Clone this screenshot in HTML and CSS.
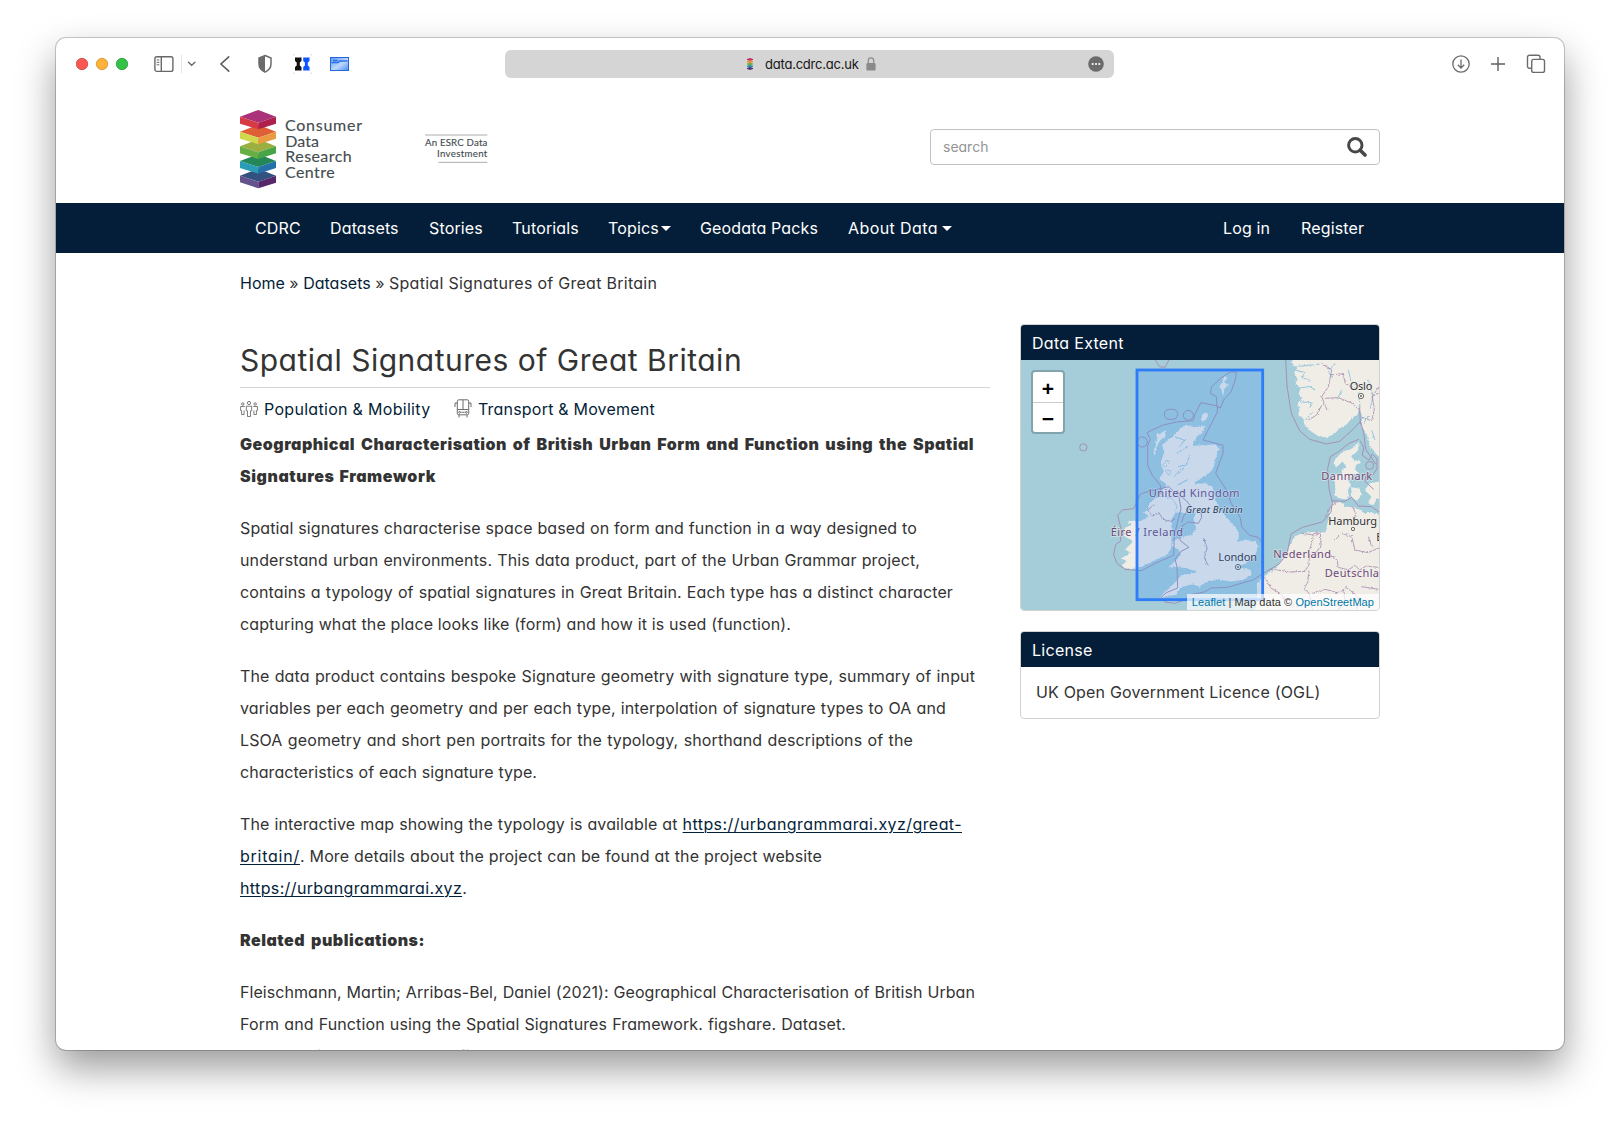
FILE: index.html
```html
<!DOCTYPE html>
<html lang="en">
<head>
<meta charset="utf-8">
<title>Spatial Signatures of Great Britain</title>
<link rel="stylesheet" href="styles.css">
</head>
<body>
<div class="window">
  <div class="toolbar">
    <svg class="lights" width="52" height="14" viewBox="0 0 52 14"><circle cx="6" cy="7" r="5.7" fill="#fc5753" stroke="#cf3f3c" stroke-width=".8"/><circle cx="26" cy="7" r="5.7" fill="#fdb23c" stroke="#d1912f" stroke-width=".8"/><circle cx="46" cy="7" r="5.7" fill="#34c147" stroke="#279a35" stroke-width=".8"/></svg>
    <svg class="side" width="42" height="20" viewBox="0 0 42 20" fill="none" stroke="#686868" stroke-width="1.4"><rect x=".9" y="2.8" width="18" height="14.6" rx="2"/><path d="M7.300 3v14.300"/><path d="M2.700 6h2.600M2.700 8.400h2.600M2.700 10.800h2.600" stroke-width="1"/><path d="M27.500 1v18" stroke="#e4e4e4" stroke-width="1"/><path d="M34.500 8.200l3.200 3 3.200-3" stroke-linecap="round"/></svg>
    <svg class="back" width="10" height="18" viewBox="0 0 10 18"><path d="M8.700 1.800 1 9l7.700 7.200" fill="none" stroke="#5f5f5f" stroke-width="1.600" stroke-linecap="round"/></svg>
    <svg class="shield" width="14" height="20" viewBox="0 0 14 20"><path d="M7 1.500 13 4v6c0 4.200-2.600 6.500-6 8.200C3.600 16.500 1 14.200 1 10V4z" fill="none" stroke="#6b6b6b" stroke-width="1.500"/><path d="M7 1.500V18.200C3.600 16.500 1 14.200 1 10V4z" fill="#6b6b6b"/></svg>
    <svg class="ext" width="19" height="20" viewBox="0 0 19 20"><path d="M2 3.500h6.500v3.500L6.800 8.500v3l1.700 1.600V16.500H2v-3.400l1.700-1.600v-3L2 7z" fill="#111"/><path d="M10.200 3.500h6.300v3.500l-1.700 1.500v3l1.700 1.600v3.400h-6.300v-3.400l1.700-1.600v-3L10.200 7z" fill="#0a55ff"/><path d="M.5 1.500v-1h1M17.500.5h1v1M.5 18.500v1h1M17.500 19.500h1v-1" fill="none" stroke="#ccc" stroke-width=".7"/></svg>
    <svg class="folder" width="19" height="14" viewBox="0 0 19 14"><defs><linearGradient id="fg" x1="0" y1="0" x2="1" y2="1"><stop offset="0" stop-color="#5b97f5"/><stop offset=".55" stop-color="#bcd9fb"/><stop offset="1" stop-color="#4a8bf3"/></linearGradient></defs><rect x=".5" y=".5" width="18" height="13" fill="url(#fg)" stroke="#2467dc"/><path d="M3 3.500h4.500M1.500 5.500h6.500l1.500-1.500H17.500" fill="none" stroke="#2e70e8" stroke-width="1.400"/></svg>
    <div class="address">
      <svg width="6" height="12" viewBox="0 0 6 12"><path d="M0 1l3-1 3 1v1L3 3 0 2z" fill="#c52f5c"/><path d="M0 3.300l3-.8 3 .8v1l-3 1-3-1z" fill="#ef9138"/><path d="M0 5.500l3-.8 3 .8v1l-3 1-3-1z" fill="#6bb044"/><path d="M0 7.700l3-.8 3 .8v1l-3 1-3-1z" fill="#238caa"/><path d="M0 10l3-1 3 1v1l-3 1-3-1z" fill="#52347c"/></svg>
      <span class="host">data.cdrc.ac.uk</span>
      <svg class="lock" width="10" height="14" viewBox="0 0 10 14"><rect x=".4" y="6" width="9.200" height="7.500" rx="1.200" fill="#8a8a8a"/><path d="M2.300 6.500V3.800a2.700 2.900 0 0 1 5.400 0v2.700" fill="none" stroke="#8a8a8a" stroke-width="1.200"/></svg>
      <svg class="dots" width="16" height="16" viewBox="0 0 16 16"><circle cx="8" cy="8" r="7.800" fill="#6b6b6b"/><g fill="#fff"><circle cx="4.700" cy="8" r="1.100"/><circle cx="8" cy="8" r="1.100"/><circle cx="11.300" cy="8" r="1.100"/></g></svg>
    </div>
    <svg class="down" width="18" height="18" viewBox="0 0 18 18" fill="none" stroke="#6b6b6b" stroke-width="1.300"><circle cx="9" cy="9" r="8.200"/><path d="M9 4.500v8.300M5.800 9.800 9 13l3.200-3.200"/></svg>
    <svg class="plus" width="16" height="16" viewBox="0 0 16 16"><path d="M8 1v14M1 8h14" stroke="#5f5f5f" stroke-width="1.400"/></svg>
    <svg class="tabs" width="20" height="20" viewBox="0 0 20 20" fill="none" stroke="#6b6b6b" stroke-width="1.400"><path d="M5.500 14.300H3.500a2 2 0 0 1-2-2V3.200a2 2 0 0 1 2-2h8.500a2 2 0 0 1 2 2v2"/><rect x="5.700" y="5.400" width="12.800" height="13" rx="2"/></svg>
  </div>

  <header class="masthead">
    <svg width="260" height="100" viewBox="30 0 780 300">
      <g><path d="M85 206l53 21-53 18-55-18z" fill="#33517f"/><path d="M30 227l55 18v20l-55-18z" fill="#62538c"/><path d="M138 227l-53 18v20l53-17z" fill="#562769"/></g>
      <g><path d="M85 162l53 21-53 18-55-18z" fill="#238757"/><path d="M30 183l55 18v20l-55-17z" fill="#2a9cb5"/><path d="M138 183l-53 18v20l53-17z" fill="#2470a9"/></g>
      <g><path d="M85 118l53 21-53 18-55-18z" fill="#9baf41"/><path d="M30 139l55 18v20l-55-17z" fill="#67af45"/><path d="M138 139l-53 18v20l53-17z" fill="#47a447"/></g>
      <g><path d="M85 74l53 21-53 18-55-18z" fill="#df6037"/><path d="M30 95l55 18v20l-55-17z" fill="#d0d94e"/><path d="M138 95l-53 18v20l53-17z" fill="#e99b42"/></g>
      <g><path d="M85 30l53 20-53 18-55-18z" fill="#ab3278"/><path d="M30 50l55 18v20l-55-17z" fill="#d63a45"/><path d="M138 50l-53 18v20l53-17z" fill="#ae204b"/></g>
      <g class="logo-text"><text x="165" y="93" textLength="231">Consumer</text><text x="166" y="140" textLength="101">Data</text><text x="166" y="187" textLength="199">Research</text><text x="165" y="234" textLength="149">Centre</text></g>
      <path d="M585 105h187M625 187h147" stroke="#a9adb2" stroke-width="3"/>
      <g class="esrc-text"><text x="585" y="139" textLength="187">An ESRC Data</text><text x="621" y="171" textLength="151">Investment</text></g>
    </svg>
    <div class="search"><span>search</span><svg width="20" height="20" viewBox="0 0 20 20" fill="none" stroke="#484848"><circle cx="8.300" cy="8.300" r="6.700" stroke-width="3"/><path d="M13.200 13.200 18 18" stroke-width="3.600" stroke-linecap="round"/></svg></div>
  </header>

  <nav class="nav">
    <a>CDRC</a><a>Datasets</a><a>Stories</a><a>Tutorials</a><a class="topic-menu">Topics<i class="caret"></i></a><a>Geodata Packs</a><a class="about">About Data<i class="caret"></i></a>
    <a class="login">Log in</a><a>Register</a>
  </nav>

  <div class="crumbs"><a>Home</a> » <a>Datasets</a> » <span>Spatial Signatures of Great Britain</span></div>

  <div class="columns">
    <main class="main">
      <h1><span>Spatial Signatures of Great Britain</span></h1>
      <div class="topics">
        <svg width="18" height="16" viewBox="0 0 18 16" fill="none" stroke="#5c5c5c" stroke-width=".8"><circle cx="9" cy="2" r="1.600"/><circle cx="2.800" cy="3" r="1.200"/><circle cx="15.200" cy="3" r="1.200"/><path d="M6.300 5.200h5.400v4.600h-1.200v5.700h-3V9.800H6.300zM4.800 5.500H.6v4h1v4h2.500v-4M13.200 5.500h4.200v4h-1v4h-2.500v-4"/></svg>
        <a class="pop">Population &amp; Mobility</a>
        <svg class="bus" width="18" height="19" viewBox="0 0 18 19" fill="none" stroke="#5c5c5c" stroke-width=".9"><rect x="3.300" y=".8" width="11.400" height="15" rx="1.500"/><path d="M9 1v9.500M3.500 10.500h11M3.300 4H1v4M14.700 4H17v4M5 16v2.500M13 16v2.500M7.300 13.300h3.400"/><circle cx="5.600" cy="13.300" r=".9"/><circle cx="12.400" cy="13.300" r=".9"/></svg>
        <a class="trans">Transport &amp; Movement</a>
      </div>
      <p class="strong intro"><span>Geographical Characterisation of British Urban Form and Function using the Spatial</span><span>Signatures Framework</span></p>
      <p class="form"><span>Spatial signatures characterise space based on form and function in a way designed to</span><span>understand urban environments. This data product, part of the Urban Grammar project,</span><span>contains a typology of spatial signatures in Great Britain. Each type has a distinct character</span><span>capturing what the place looks like (form) and how it is used (function).</span></p>
      <p class="product"><span>The data product contains bespoke Signature geometry with signature type, summary of input</span><span>variables per each geometry and per each type, interpolation of signature types to OA and</span><span>LSOA geometry and short pen portraits for the typology, shorthand descriptions of the</span><span>characteristics of each signature type.</span></p>
      <p class="links"><span>The interactive map showing the typology is available at <a>https://urbangrammarai.xyz/great-</a></span><span><a class="wide">britain/</a>. More details about the project can be found at the project website</span><span><a class="snug">https://urbangrammarai.xyz</a>.</span></p>
      <p class="strong related"><span>Related publications:</span></p>
      <p class="cite"><span>Fleischmann, Martin; Arribas-Bel, Daniel (2021): Geographical Characterisation of British Urban</span><span>Form and Function using the Spatial Signatures Framework. figshare. Dataset.</span><span><a>https://doi.org/10.6084/m9.figshare</a></span></p>
    </main>

    <aside class="aside">
      <section class="panel">
        <h2>Data Extent</h2>
        <div class="map">
          <svg width="358" height="250" viewBox="18 120 1074 750">
            <defs><filter id="coast" x="-5%" y="-5%" width="110%" height="110%"><feTurbulence type="fractalNoise" baseFrequency=".16" numOctaves="2" seed="4"/><feDisplacementMap in="SourceGraphic" scale="9" xChannelSelector="R" yChannelSelector="G"/></filter></defs>
            <rect x="18" y="120" width="1074" height="750" fill="#a4cdd9"/>
            <g filter="url(#coast)">
            <g fill="#f0ede7" stroke="#8ec6dc" stroke-width="2" stroke-linejoin="round">
              <path d="M832 116l-2 20 16 8-10 12 10 22-6 12 14 14-4 20 10 14-14 10 6 22-4 14 16 12 2 16 20 22 24 16 26 4 24-12 12-14 24-14 12-16 20-12 4-16 8 18-2 30 16 26 8 30 18 26 20 20V116z"/>
              <path d="M1034 362l-22 22-30 10-22 22-8 20 16 4 14-14 10 14-14 12 4 14-22-4-6 10 6 30-2 26 14 8 22 4 10-10-4-20 10-14-8-14 14-16 22-8-16-8 2-14 14-8-6-10-14 4-8-14 18-12zM1008 500l26 4 8 20-16 20-20-12zM1048 510l16-22 36-6v50l-14 6-10 20-18-8 10-20z"/>
              <path d="M948 548l30-4 12 14 36 4 22 16 20-2 34 8V880H718l8-40-2-50 22-22 34-22 18-26 16-20 12-32 14-22 34-10 30-2 26 2 6-26z"/>
              <path d="M500 320l14-6 24 6 34-4-8 22-18 12-8 14-4 12 68-4 12 14-12 32-4 24-14 18-28 18-16 12 30-2 24 12 10 42 12 26 22 26 28 30 8 22-6 18 24-6 30 6 10 16-14 34-24 16-20 12 34 6 4 14-22 18-40 6-46-6-34 10-16 12-20-8-34 8-18 24-24 4-28 6 16-18 36-34 18-20 44-8-28-10-36-4-24 2 22-20 18-18-6-16-22-12 8-18 30-12 26-4 10-22-8-26 8-18-24 4-26-4-22 8 10-20-10-20-22 12-4-22-14-12 24-30-24-18 14-20-8-30 10-30-6-22 16-12z"/>
              <path d="M402 548l20-16 24-4 26 8 14 22-4 22-12 20 2 44-2 38-14 24-34 14-42 22-38 8-24-10 14-18-18-6 30-18-16-10 26-24-26-14-2-26 22-10-14-10 28-4 14 2 24-14-14-10 12-12z"/>
              <path d="M456 326l-4 24-16 12-10 20-2 24-10 4 2-26 10-28-4-14 20-6zM420 380l6 6-6 22-6-6zM455 420l10 6-14 14-8-4zM448 450l20 2-6 14zM562 280l14-4 4 14-14 18-10-8zM628 166l10 6-8 16 12 4-12 14-6 30-6-28-8-6 10-16z"/>
            </g>
            <g fill="none" stroke="#93c7dc" stroke-width="3"><path d="M840 150l30 8-10 14 26 10M850 205l34-6 18 12M852 245l40 4-8 14M872 300l20-24M845 140l70-8M960 130l-20 22 10 20M1000 150l8 34 20 14M1035 262l-4-44M980 210l-14 30M1060 180l14 46-8 40M1045 310l16-22M1070 330l10 30"/><path d="M492 460l22-24 10-30M486 400l32-20M480 350l30 12M488 495l30-16M490 440l20-4M492 380l24-26M478 470l20-24"/></g>
            </g>
            <g fill="none" stroke="#a391b6" stroke-width="3" stroke-linejoin="round">
              <path d="M812 118l4 80 10 64 4 20 24 50 30 26 50 14 40-8 40-36 22-24 10 34 6 50 30 44M1034 262l2 50"/>
              <path d="M1032 358l-30 12-30 24-26 16-8 36 4 60 10 40-4 30-26 30-60 16-34 20-12 60-24 30-50 30-28 18-36 10-40 12-50 2-20 12-40 8-24 18-26 8-28-4-12-14 16-14 34-14-2-64-6-22 18-24 24-12-26-20-2-16 10-20-4-8 20-12 30 4 10-18-4-28"/>
              <path d="M500 608l6-20 22-28-14-18-22-18-6-14M640 520l-12-20-26-40 22-60v-24l-60-16 42-82 2-20-50-10-16 30-8 24-50 4-42 10-26 12-20 10 10 20-8 18v60l14 30 24 30 2 28"/>
              <path d="M640 520l8 30 18 24 10 20 4 26 24 26 26 6 14 20-4 60"/>
              <path d="M400 514l-24 8-20 44-34 4-14 16 12 48-4 30-14 10-6 30 10 26 24 18 50 4 40-22 56-24 2-60 12-50 8-30-6-34-30-32zM646 156l-28 18-28 26-4 20 18 10 2 30 10 4 10-24 22-24 14-40 2-20zM420 118l14 22 16 2 12-22"/>
              <circle cx="205" cy="382" r="11"/><rect x="448" y="268" width="40" height="30" rx="14"/><circle cx="520" cy="286" r="15"/><circle cx="382" cy="366" r="15"/><circle cx="1064" cy="436" r="12"/>
              <path d="M1036 362l10 20-4 24 20 14 10-18 14 14v30l-12 18-20-4-4 24 26 24M950 542l40 2 20-12 20 26 40 2 22 16"/>
            </g>
            <g fill="none" stroke="#a78bae" stroke-width="2.500" filter="url(#coast)">
              <path d="M418 554l-20 16 14 18 20-10 12 20 24 6 12-8M566 654l10 30-8 30 12 24M748 770l20 34 30 18 20 34 30 4 30-6M760 748l30 2 34 6 46-2 12-20 2-34M880 700l16-50 20-12 2 40-20 26M882 752l-4 34-10 20 14 14 10 50M960 660l20-20 30 10 10 40 40 8 30-14M930 590l20-34 14-8M860 640l30 4 20-8M1012 560l10 20-6 20M940 700l26 20 4 22 30 8 20-14 14 14 20-12 36 4M890 820l40-12 36 10 20-8 4 30-20 30M990 800l40 30-4 38M1040 800l50 8M1060 650l10 30"/>
              <path d="M920 130l30 20-10 50-20 30 16 40M945 165l40-4 6 30 30 14M930 235l40-2 44 18 16 18M1092 200l-20 30 6 40-8 32-30-10M1070 230l22-12M880 300l24-14 16-30"/>
            </g>
            <g class="place"><text x="1004" y="210" textLength="68">Oslo</text><text x="940" y="614" textLength="146">Hamburg</text><text x="1084" y="664">B</text></g>
            <g class="land"><text x="919" y="479" textLength="152">Danmark</text><text x="775" y="713" textLength="173">Nederland</text><text x="929" y="770" textLength="206">Deutschland</text><text x="401" y="532" textLength="273">United Kingdom</text><text x="287" y="648" textLength="217">Éire / Ireland</text></g>
            <g class="place"><text x="610" y="722" textLength="116">London</text></g>
            <text class="isle" x="512" y="578" textLength="171">Great Britain</text>
            <g fill="#f0ede7" stroke="#333" stroke-width="2"><circle cx="1038" cy="228" r="8"/><circle cx="1038" cy="228" r="2"/><circle cx="669" cy="741" r="8"/><circle cx="669" cy="741" r="2"/><circle cx="1014" cy="627" r="5"/></g>
            <rect x="366" y="150" width="377" height="689" fill="#3388ff" fill-opacity=".2" stroke="#2f7cf8" stroke-width="8.500"/>
          </svg>
          <div class="zoomer"><b>+</b><b>−</b></div>
          <div class="credit"><a>Leaflet</a> | Map data © <a>OpenStreetMap</a></div>
        </div>
      </section>
      <section class="panel">
        <h2>License</h2>
        <div class="licence">UK Open Government Licence (OGL)</div>
      </section>
    </aside>
  </div>
</div>
</body>
</html>
```
FILE: styles.css
```css
* { box-sizing: border-box; }
body {
  margin: 0;
  height: 1124px;
  overflow: hidden;
  padding: 38px 56px 0;
  background: #fff;
  color: #333;
  font: 16px/32px Inter, "Open Sans", sans-serif;
  font-feature-settings: "cv11", "calt" 0;
}
svg { display: block; flex: none; }
.window {
  width: 1508px;
  height: 1012px;
  overflow: hidden;
  border-radius: 10px;
  background: #fff;
  box-shadow: 0 0 0 1px rgba(0, 0, 0, .2), 0 18px 38px rgba(0, 0, 0, .4);
}

/* browser chrome */
.toolbar { display: flex; align-items: center; height: 52px; padding-left: 20px; }
.side { margin-left: 26px; }
.back { margin-left: 24px; }
.shield { margin-left: 28px; }
.ext { margin-left: 21px; }
.folder { margin-left: 18px; }
.address {
  display: flex;
  align-items: center;
  width: 609px;
  height: 28px;
  margin-left: 156px;
  padding-left: 242px;
  border-radius: 6px;
  background: #d5d5d5;
  color: #161616;
  font-size: 13px;
}
.host { width: 93px; margin-left: 12px; white-space: nowrap; letter-spacing: -.22px; }
.lock { margin-left: 8px; }
.dots { margin-left: 212px; }
.down { margin-left: 338px; }
.plus { margin-left: 20px; }
.tabs { margin-left: 20px; }

/* site header */
.masthead { display: flex; justify-content: space-between; height: 113px; padding: 10px 184px 0; }
.logo-text { fill: #454c50; font: 400 48px Lato, sans-serif; stroke: #454c50; stroke-width: .4; }
.esrc-text { fill: #454c50; font: 400 29px Lato, sans-serif; stroke: #454c50; stroke-width: .4; }
.search {
  display: flex;
  align-items: center;
  justify-content: space-between;
  width: 450px;
  height: 36px;
  margin-top: 29px;
  padding: 0 12px;
  border: 1px solid #c2c2c2;
  border-radius: 4px;
  color: #949494;
  font-size: 14px;
}
.nav {
  display: grid;
  grid-template-columns: 75px 99px 83px 96px 92px 148px 375px 78px 94px;
  height: 50px;
  padding-left: 184px;
  background: #041e39;
  color: #fff;
  letter-spacing: .15px;
  line-height: 50px;
}
.nav a { padding-left: 15px; white-space: nowrap; }
.caret {
  display: inline-block;
  margin-left: 4px;
  vertical-align: 3px;
  border: 5px solid transparent;
  border-top-color: #fff;
  border-bottom: 0;
}
.topic-menu .caret { margin-left: 2px; }
.about { letter-spacing: .4px; }
a { color: #041e39; }
.nav a { color: #fff; }
.crumbs { height: 71px; padding: 14px 184px 0; white-space: nowrap; }
.crumbs span { letter-spacing: .28px; }

/* page body */
.columns { display: grid; grid-template-columns: 750px 360px; gap: 30px; padding: 0 184px; }
.main { padding-top: 11px; }
h1 { margin: 0; height: 53px; border-bottom: 1px solid #d4d4d4; font-size: 30px; font-weight: 400; line-height: 50px; }
.topics { display: flex; align-items: center; height: 40px; padding-top: 1px; white-space: nowrap; letter-spacing: .3px; }
.pop { width: 167px; margin-left: 6px; }
.bus { margin-left: 23px; }
.trans { margin-left: 6px; letter-spacing: .2px; }
p { margin: 0 0 20px; letter-spacing: .12px; }
h1 span, p > span { display: block; white-space: nowrap; text-align-last: justify; }
h1 span { letter-spacing: .5px; }
.strong { font-weight: 900; letter-spacing: .5px; }
.links a, .cite a { text-decoration: underline; text-underline-offset: 2px; text-decoration-thickness: 1px; letter-spacing: .43px; }
.links .wide { letter-spacing: .75px; }
.links .snug { letter-spacing: .37px; }
h1 span { width: 502px; }
.intro span:nth-child(1) { width: 734px; }
.intro span:nth-child(2) { width: 196px; letter-spacing: .58px; }
.form span:nth-child(1) { width: 677px; }
.form span:nth-child(2) { width: 680px; }
.form span:nth-child(3) { width: 713px; }
.form span:nth-child(4) { width: 551px; }
.product span:nth-child(1) { width: 735px; }
.product span:nth-child(2) { width: 706px; }
.product span:nth-child(3) { width: 673px; }
.product span:nth-child(4) { width: 297px; letter-spacing: .06px; }
.links span:nth-child(1) { width: 722px; }
.links span:nth-child(2) { width: 582px; }
.links span:nth-child(3) { width: 225px; }
.related span { width: 185px; }
.cite span:nth-child(1) { width: 735px; letter-spacing: .06px; }
.cite span:nth-child(2) { width: 606px; }

/* sidebar */
.panel { margin-bottom: 20px; overflow: hidden; border: 1px solid #d3d3d3; border-radius: 4px; }
.panel h2 { margin: 0; height: 35px; padding-left: 11px; background: #041e39; color: #fff; font-size: 16px; font-weight: 400; line-height: 36px; letter-spacing: .3px; }
.map { position: relative; height: 250px; }
.licence { height: 51px; padding-left: 15px; line-height: 50px; letter-spacing: .18px; }
.place, .land, .isle { font: 33px "Noto Sans", sans-serif; paint-order: stroke; stroke: #f2f0ee; stroke-opacity: .6; stroke-width: 5px; stroke-linejoin: round; }
.place { fill: #333; }
.land { fill: #6e4a78; }
.isle { fill: #222; font-size: 28px; font-style: italic; }
.zoomer { position: absolute; left: 10px; top: 10px; width: 34px; border: 2px solid rgba(0, 0, 0, .2); border-radius: 4px; background: #fff; background-clip: padding-box; }
.zoomer b { display: block; height: 30px; color: #000; font: 700 21px/34px "Liberation Sans", sans-serif; text-align: center; }
.zoomer b + b { border-top: 1px solid #ccc; line-height: 31px; }
.credit { position: absolute; right: 0; bottom: 0; height: 16px; padding: 0 5px; background: rgba(255, 255, 255, .7); color: #333; font: 11px/16px "Liberation Sans", sans-serif; letter-spacing: .07px; }
.credit a { color: #0078a8; }
```
